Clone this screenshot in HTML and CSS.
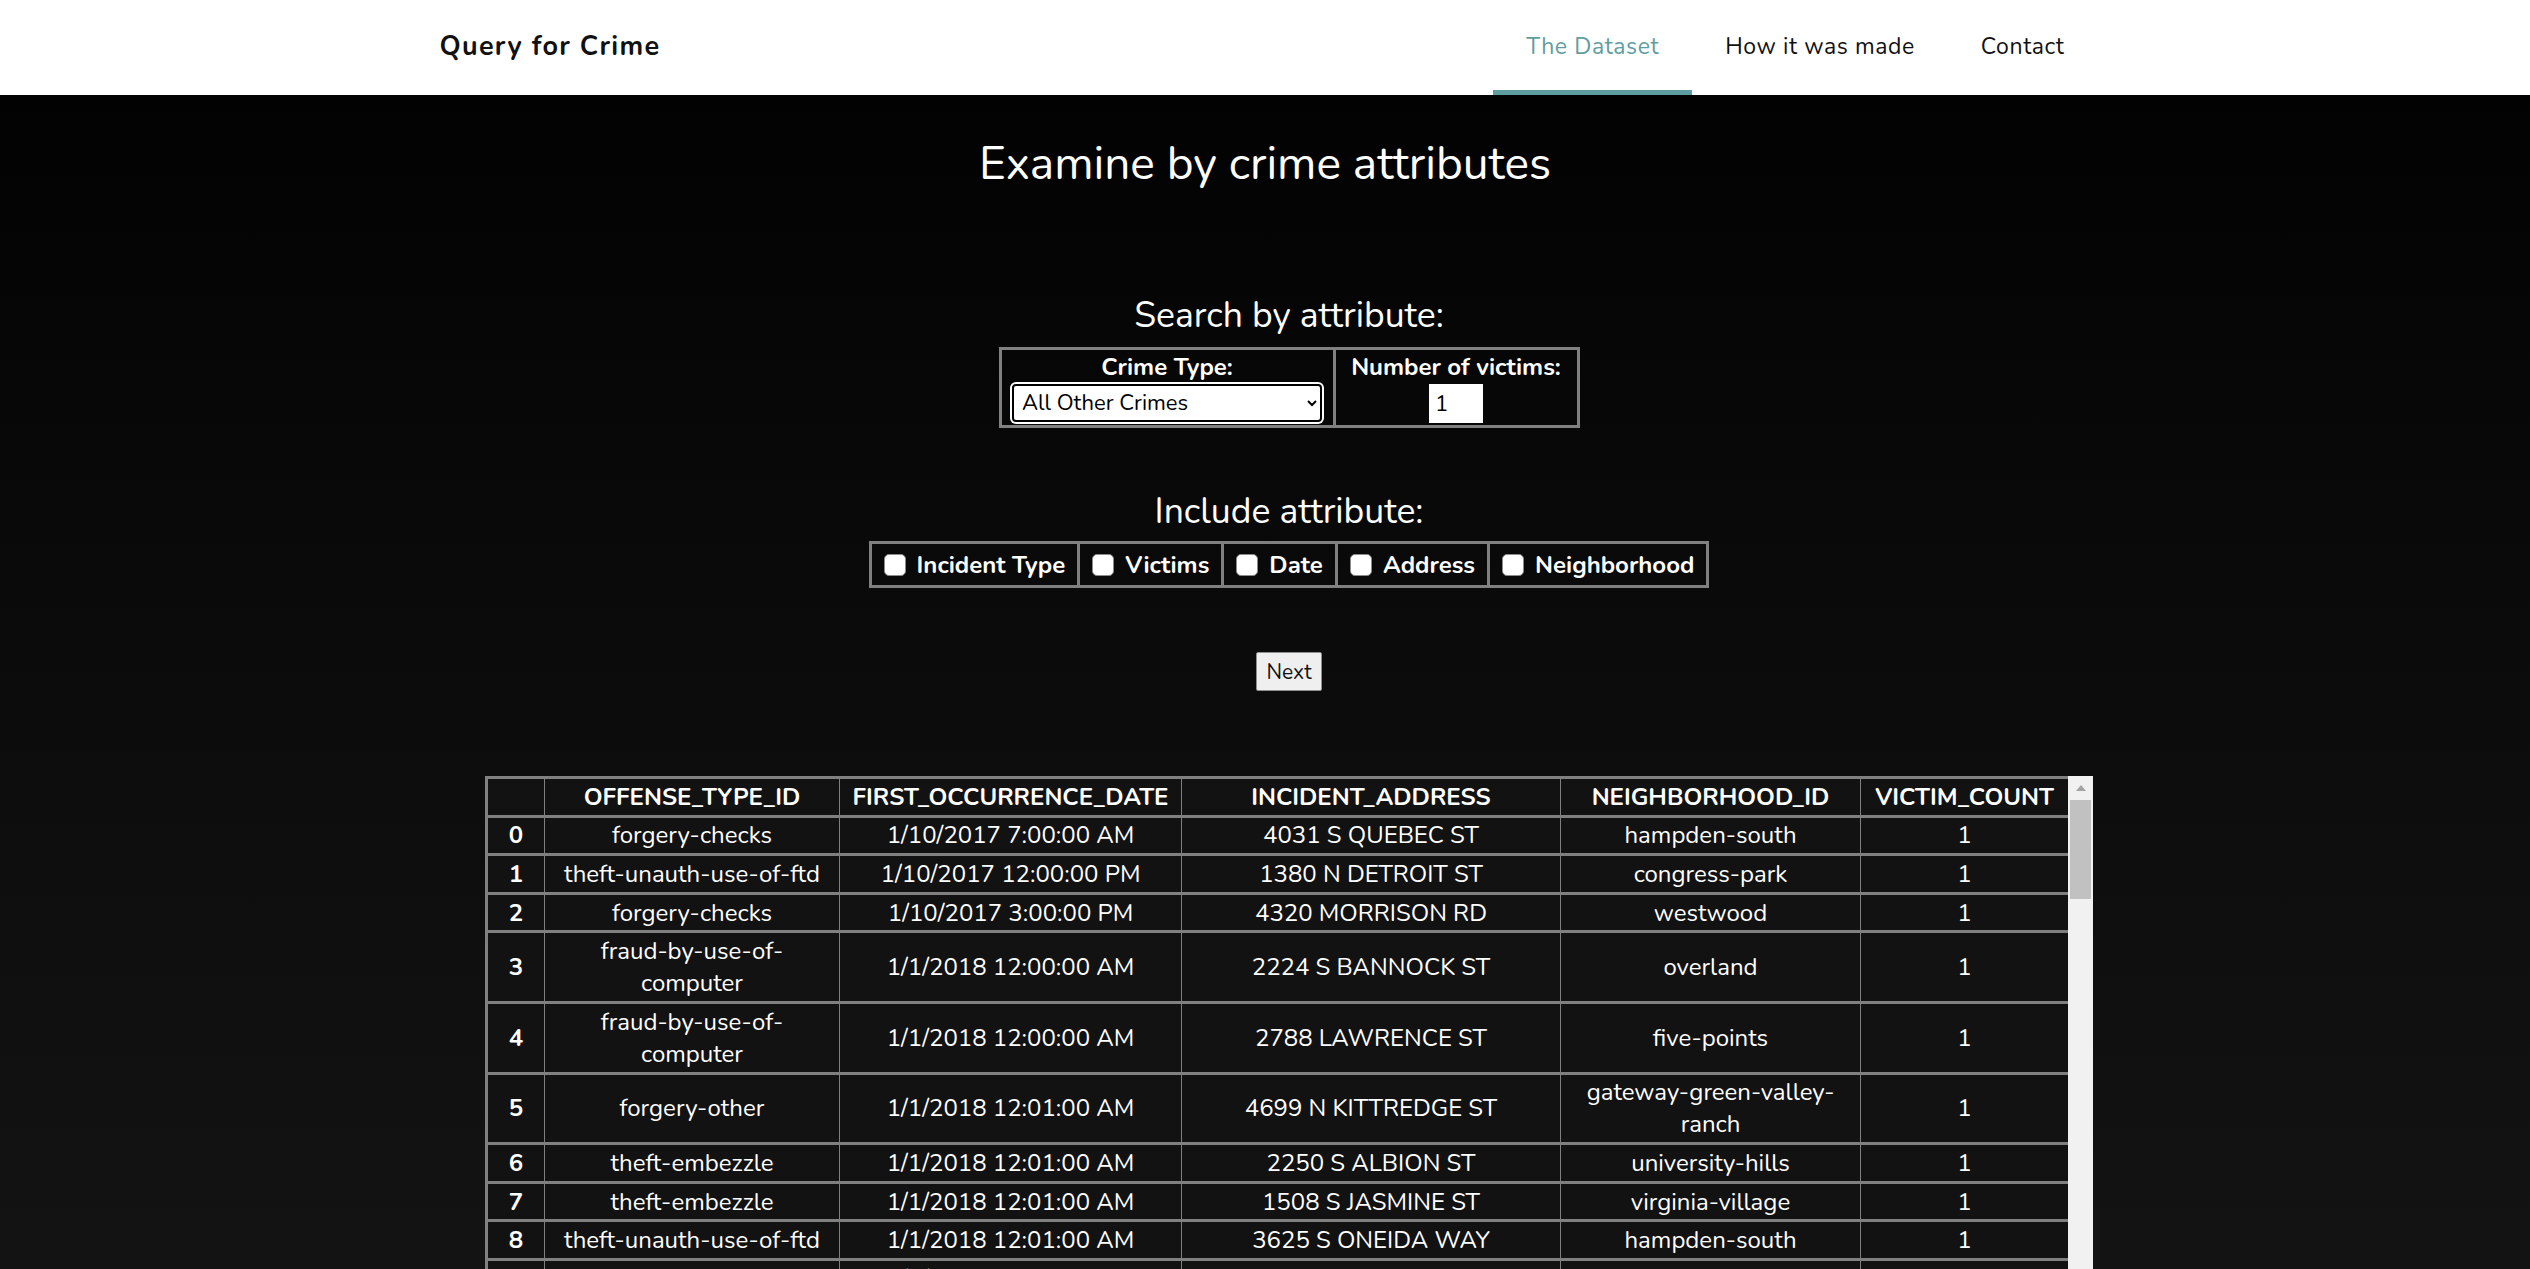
FILE: index.html
```html
<!DOCTYPE html>
<html lang="en">
<head>
<meta charset="utf-8">
<title>Query for Crime</title>
<link rel="stylesheet" href="styles.css">
</head>
<body>
<header class="topbar">
  <div class="bar">
    <a class="brand" href="#">Query for Crime</a>
    <nav class="nav">
      <a class="nav-link active" href="#">The Dataset</a>
      <a class="nav-link" href="#">How it was made</a>
      <a class="nav-link" href="#">Contact</a>
    </nav>
  </div>
</header>
<main class="main">
  <h1 class="page-title">Examine by crime attributes</h1>

  <div class="lower">
    <section class="block search-block">
      <h2 class="block-title">Search by attribute:</h2>
      <table class="form-table">
        <tr>
          <td class="crime-cell">
            <label class="field-label" for="crime">Crime Type:</label>
            <select id="crime" class="crime-select">
              <option>All Other Crimes</option>
              <option>Larceny</option>
              <option>Theft from Motor Vehicle</option>
            </select>
          </td>
          <td class="victim-cell">
            <label class="field-label" for="victims">Number of victims:</label>
            <input id="victims" class="victim-input" type="text" value="1">
          </td>
        </tr>
      </table>
    </section>

    <section class="block include-block">
      <h2 class="block-title">Include attribute:</h2>
      <table class="check-table">
        <tr>
          <td><label class="check"><input type="checkbox"><span>Incident Type</span></label></td>
          <td><label class="check"><input type="checkbox"><span>Victims</span></label></td>
          <td><label class="check"><input type="checkbox"><span>Date</span></label></td>
          <td><label class="check"><input type="checkbox"><span>Address</span></label></td>
          <td><label class="check"><input type="checkbox"><span>Neighborhood</span></label></td>
        </tr>
      </table>
    </section>

    <div class="actions"><button class="next-btn" type="button">Next</button></div>

    <div class="results">
      <div class="table-view">
        <table class="data">
          <colgroup>
            <col class="c-idx"><col class="c-off"><col class="c-date"><col class="c-addr"><col class="c-nb"><col class="c-vc">
          </colgroup>
          <thead>
            <tr><th></th><th>OFFENSE_TYPE_ID</th><th>FIRST_OCCURRENCE_DATE</th><th>INCIDENT_ADDRESS</th><th>NEIGHBORHOOD_ID</th><th>VICTIM_COUNT</th></tr>
          </thead>
          <tbody>
            <tr><th>0</th><td>forgery-checks</td><td>1/10/2017 7:00:00 AM</td><td>4031 S QUEBEC ST</td><td>hampden-south</td><td>1</td></tr>
            <tr><th>1</th><td>theft-unauth-use-of-ftd</td><td>1/10/2017 12:00:00 PM</td><td>1380 N DETROIT ST</td><td>congress-park</td><td>1</td></tr>
            <tr><th>2</th><td>forgery-checks</td><td>1/10/2017 3:00:00 PM</td><td>4320 MORRISON RD</td><td>westwood</td><td>1</td></tr>
            <tr><th>3</th><td>fraud-by-use-of-<br>computer</td><td>1/1/2018 12:00:00 AM</td><td>2224 S BANNOCK ST</td><td>overland</td><td>1</td></tr>
            <tr><th>4</th><td>fraud-by-use-of-<br>computer</td><td>1/1/2018 12:00:00 AM</td><td>2788 LAWRENCE ST</td><td>five-points</td><td>1</td></tr>
            <tr><th>5</th><td>forgery-other</td><td>1/1/2018 12:01:00 AM</td><td>4699 N KITTREDGE ST</td><td>gateway-green-valley-<br>ranch</td><td>1</td></tr>
            <tr><th>6</th><td>theft-embezzle</td><td>1/1/2018 12:01:00 AM</td><td>2250 S ALBION ST</td><td>university-hills</td><td>1</td></tr>
            <tr><th>7</th><td>theft-embezzle</td><td>1/1/2018 12:01:00 AM</td><td>1508 S JASMINE ST</td><td>virginia-village</td><td>1</td></tr>
            <tr><th>8</th><td>theft-unauth-use-of-ftd</td><td>1/1/2018 12:01:00 AM</td><td>3625 S ONEIDA WAY</td><td>hampden-south</td><td>1</td></tr>
            <tr><th>9</th><td>theft-unauth-use-of-ftd</td><td>1/1/2018 12:01:00 AM</td><td>1500 BLOCK S SANTA FE DR</td><td>overland</td><td>1</td></tr>
          </tbody>
        </table>
      </div>
      <div class="vscroll" aria-hidden="true">
        <div class="vscroll-up"><span class="arrow-up"></span></div>
        <div class="vscroll-thumb"></div>
      </div>
    </div>
  </div>
</main>
</body>
</html>
```

FILE: styles.css
```css
* { box-sizing: border-box; }

body {
  margin: 0;
  font-family: "Nunito", "Lato", "Open Sans", sans-serif;
  color: #fff;
  background: #111;
  overflow: hidden;
}

/* ---------- top bar ---------- */
.topbar {
  background: #fff;
  height: 95px;
}
.bar {
  width: 1655px;
  height: 95px;
  margin: 0 auto;
  display: flex;
  justify-content: space-between;
  align-items: stretch;
}
.brand {
  align-self: center;
  color: #111;
  text-decoration: none;
  font-weight: 700;
  font-size: 27px;
  letter-spacing: 1.3px;
  padding-left: 2px;
  padding-bottom: 2px;
}
.nav {
  display: flex;
  margin-right: -5px;
}
.nav-link {
  display: flex;
  align-items: center;
  padding: 3px 33px 0;
  border-bottom: 5px solid transparent;
  color: #111;
  text-decoration: none;
  font-size: 23px;
  letter-spacing: 0.6px;
}
.nav-link.active {
  color: #5f9ea0;
  border-bottom-color: #5f9ea0;
}

/* ---------- main ---------- */
.main {
  background: linear-gradient(to bottom, #020202 0%, #0b0b0b 45%, #141414 100%);
  min-height: 1174px;
  padding-top: 42px;
  display: flex;
  flex-direction: column;
  align-items: center;
}
.page-title {
  margin: 0;
  font-size: 46px;
  font-weight: 400;
  line-height: 53px;
}
.lower {
  width: 100%;
  padding-left: 48px;
  display: flex;
  flex-direction: column;
  align-items: center;
}
.block {
  display: flex;
  flex-direction: column;
  align-items: center;
}
.block-title {
  margin: 0;
  font-size: 35.5px;
  font-weight: 400;
  line-height: 38px;
}
.search-block { margin-top: 107px; }
.include-block { margin-top: 65px; }

/* ---------- search table ---------- */
.form-table {
  margin-top: 12px;
  border-collapse: collapse;
  border: 3px solid #808080;
}
.form-table td {
  border: 3px solid #808080;
  text-align: center;
  vertical-align: top;
  padding: 4px 10px 2px;
}
.crime-cell { width: 334px; }
.victim-cell { width: 244px; }
.field-label {
  display: block;
  font-weight: 700;
  font-size: 24px;
  line-height: 27px;
  margin-bottom: 3px;
}
.crime-select {
  display: block;
  width: 310px;
  height: 38px;
  margin: 0 auto;
  font-family: inherit;
  font-size: 22px;
  color: #000;
  background: #fff;
  border: 2px solid #000;
  border-radius: 4px;
  box-shadow: 0 0 0 2px #fff;
  padding: 0 4px;
}
.victim-input {
  display: block;
  width: 54px;
  height: 39px;
  margin: 0 auto;
  border: none;
  background: #fff;
  color: #000;
  font-family: inherit;
  font-size: 22px;
  padding: 0 6px;
}

/* ---------- include table ---------- */
.check-table {
  margin-top: 10px;
  border-collapse: collapse;
  border: 3px solid #808080;
}
.check-table td {
  border: 3px solid #808080;
  height: 44px;
  padding: 0 12px;
}
.check {
  display: flex;
  align-items: center;
  gap: 11px;
  font-weight: 700;
  font-size: 24px;
  white-space: nowrap;
}
.check input {
  appearance: none;
  -webkit-appearance: none;
  margin: 0;
  width: 22px;
  height: 22px;
  background: #fff;
  border: 1px solid #8a8a8a;
  border-radius: 5px;
}

/* ---------- action ---------- */
.actions { margin-top: 64px; }
.next-btn {
  height: 39px;
  padding: 0 9px;
  font-family: inherit;
  font-size: 21px;
  color: #111;
  background: #efefef;
  border: 1px solid #8f8f8f;
  border-radius: 2px;
}

/* ---------- data table ---------- */
.results {
  margin-top: 85px;
  display: flex;
  align-items: flex-start;
}
.table-view {
  width: 1583px;
  height: 560px;
  overflow: hidden;
}
.vscroll {
  width: 25px;
  height: 560px;
  background: #f1f1f1;
  padding: 0 2px;
  display: flex;
  flex-direction: column;
}
.vscroll-up {
  height: 24px;
  display: flex;
  align-items: center;
  justify-content: center;
}
.arrow-up {
  width: 0;
  height: 0;
  border-left: 5px solid transparent;
  border-right: 5px solid transparent;
  border-bottom: 6px solid #a3a3a3;
}
.vscroll-thumb {
  height: 99px;
  background: #c1c1c1;
}

.data {
  width: 1583px;
  table-layout: fixed;
  border-collapse: collapse;
  border: 3px solid #808080;
  background: #121212;
  font-size: 24px;
  line-height: 32px;
}
.c-idx { width: 58px; }
.c-off { width: 295px; }
.c-date { width: 342px; }
.c-addr { width: 379px; }
.c-nb { width: 300px; }
.c-vc { width: 209px; }

.data th,
.data td {
  text-align: center;
  vertical-align: middle;
  padding: 1.8px 6px;
  border-left: 1px solid #808080;
  border-right: 1px solid #808080;
  border-top: 3px solid #808080;
  border-bottom: 3px solid #808080;
}
.data th { font-weight: 700; }
.data td { font-weight: 400; }
```
